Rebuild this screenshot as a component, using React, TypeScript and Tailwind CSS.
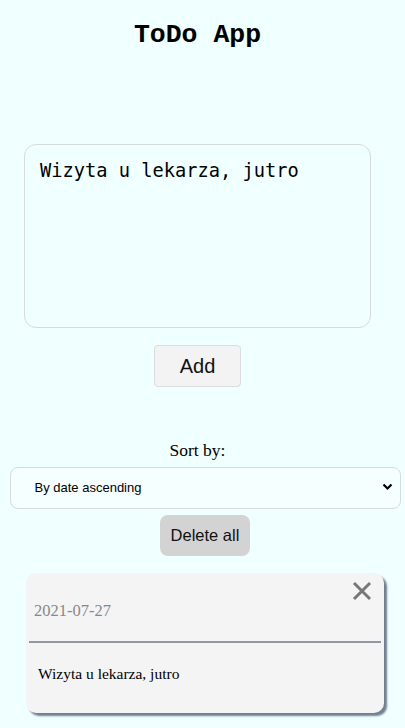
import React, { useState } from 'react';

export default function App() {
  const [text, setText] = useState('Wizyta u lekarza, jutro');
  const [sort, setSort] = useState('asc');

  return (
    <div className="min-h-[728px] bg-[#f0ffff] flex flex-col font-['Liberation_Sans',Arial,sans-serif]">
      <div className="flex flex-col items-center pr-[10px]">
        <h1 className="mt-[20px] text-[26.5px] leading-[30px] font-bold text-black font-['Liberation_Mono','Courier_New',monospace]">
          ToDo App
        </h1>

        <textarea
          value={text}
          onChange={(e) => setText(e.target.value)}
          className="mt-[94px] w-[347px] h-[184px] resize-none rounded-[12px] border border-[#d6dcdc] bg-[#f0ffff] px-[15px] py-[14px] text-[18.7px] leading-[24px] text-black outline-none font-['DejaVu_Sans_Mono','Liberation_Mono',monospace]"
        />

        <button className="mt-[17px] w-[87px] h-[42px] rounded-[4px] border border-[#dcdcdc] bg-[#f3f3f3] text-[20px] text-[#111]">
          Add
        </button>

        <p className="mt-[52px] text-[17.5px] leading-[22px] text-black font-['Liberation_Serif','Times_New_Roman',serif]">
          Sort by:
        </p>
      </div>

      <div className="flex flex-col items-center pl-[5px]">
        <div className="relative mt-[6px] w-[391px] h-[42px]">
          <select
            value={sort}
            onChange={(e) => setSort(e.target.value)}
            className="w-full h-full appearance-none rounded-[8px] border border-[#d6dcdc] bg-[#f5ffff] pl-[24px] text-[13px] text-black outline-none"
          >
            <option value="asc">By date ascending</option>
            <option value="desc">By date descending</option>
          </select>
          <svg className="pointer-events-none absolute right-[8px] top-[16px]" width="11" height="8" viewBox="0 0 11 8">
            <path d="M1.5 1.5 L5.5 5.5 L9.5 1.5" fill="none" stroke="#000" strokeWidth="2.2" />
          </svg>
        </div>

        <button className="mt-[6px] w-[90px] h-[41px] rounded-[8px] bg-[#d3d3d3] text-[16.5px] text-[#111]">
          Delete all
        </button>

        <div className="mt-[17px] w-[358px] h-[140px] rounded-[10px] bg-[#f4f4f4] shadow-[3px_3px_2px_#708090] flex flex-col relative">
          <button className="absolute right-[12px] top-[8px] p-0">
            <svg width="20" height="20" viewBox="0 0 20 20">
              <path d="M2 2 L18 18 M18 2 L2 18" stroke="#777" strokeWidth="3" />
            </svg>
          </button>
          <p className="mt-[28px] ml-[8px] text-[16.5px] leading-[20px] text-[#888] font-['Liberation_Serif','Times_New_Roman',serif]">
            2021-07-27
          </p>
          <div className="mt-[20px] mx-[3px] h-[2px] bg-[#8f99a3]" />
          <p className="mt-[21px] ml-[12px] text-[15.5px] leading-[20px] text-black font-['Liberation_Serif','Times_New_Roman',serif]">
            Wizyta u lekarza, jutro
          </p>
        </div>
      </div>
    </div>
  );
}
